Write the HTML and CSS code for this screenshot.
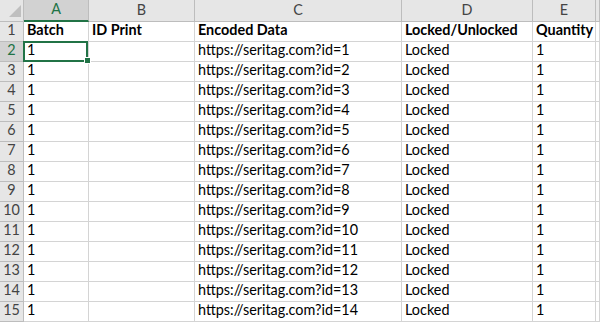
FILE: index.html
```html
<!DOCTYPE html>
<html lang="en">
<head>
    <meta charset="UTF-8">
    <title>Sheet1</title>
    <link rel="stylesheet" href="styles.css">
</head>
<body>
    <div id="sheet">
        <div class="row head-row">
            <div class="cell corner">
                <svg width="12" height="12" viewBox="0 0 12 12"><polygon points="0,12 12,12 12,0" fill="#bfbfbf"/></svg>
            </div>
            <div class="cell col-a col-head active">A</div>
            <div class="cell col-b col-head">B</div>
            <div class="cell col-c col-head">C</div>
            <div class="cell col-d col-head">D</div>
            <div class="cell col-e col-head">E</div>
            <div class="cell col-f col-head"></div>
        </div>
    </div>

    <script>
        const sheet = document.getElementById('sheet');

        function addRow(num, values, bold, selected) {
            const row = document.createElement('div');
            row.classList.add('row');

            const numCell = document.createElement('div');
            numCell.className = 'cell row-head';
            if (selected) numCell.classList.add('active');
            numCell.textContent = num;
            row.appendChild(numCell);

            const cols = ['col-a', 'col-b', 'col-c', 'col-d', 'col-e', 'col-f'];
            cols.forEach((col, i) => {
                const cell = document.createElement('div');
                cell.className = 'cell ' + col;
                if (bold) cell.classList.add('bold');
                if (selected && i === 0) cell.classList.add('selected');
                cell.textContent = values[i] || '';
                row.appendChild(cell);
            });
            sheet.appendChild(row);
        }

        addRow(1, ['Batch', 'ID Print', 'Encoded Data', 'Locked/Unlocked', 'Quantity'], true, false);
        for (let i = 1; i <= 14; i++) {
            addRow(i + 1, ['1', '', 'https://seritag.com?id=' + i, 'Locked', '1'], false, i === 1);
        }
    </script>
</body>
</html>
```

FILE: styles.css
```css
body {
    margin: 0;
    background: white;
    font-family: Lato, "Open Sans", sans-serif;
    font-size: 14.4px;
    color: #000;
    overflow: hidden;
}

#sheet {
    width: 600px;
}

.row {
    display: flex;
    height: 20px;
}

.head-row {
    height: 22px;
}

.cell {
    box-sizing: border-box;
    flex: none;
    height: 100%;
    border-right: 1px solid #d4d4d4;
    border-bottom: 1px solid #d4d4d4;
    padding: 0 0 3px 3px;
    display: flex;
    align-items: flex-end;
    white-space: nowrap;
    overflow: hidden;
    position: relative;
}

.bold {
    font-weight: bold;
}

.corner {
    width: 24px;
    background: #e6e6e6;
    border-right-color: #bdbdbd;
    border-bottom-color: #bdbdbd;
    padding: 0 2px 4px 0;
    justify-content: flex-end;
}

.corner svg {
    display: block;
}

.col-head {
    background: #e6e6e6;
    color: #444;
    justify-content: center;
    padding: 0 0 3px 0;
    border-right-color: #bdbdbd;
    border-bottom-color: #bdbdbd;
}

.row-head {
    width: 24px;
    background: #e6e6e6;
    color: #444;
    justify-content: center;
    padding: 0 0 3px 0;
    border-right-color: #bdbdbd;
    border-bottom-color: #bdbdbd;
}

.col-head.active {
    background: #d2d2d2;
    color: #217346;
    border-bottom: 2px solid #217346;
}

.row-head.active {
    background: #d2d2d2;
    color: #217346;
}

.col-a { width: 65px; }
.col-b { width: 106px; }
.col-c { width: 207px; }
.col-d { width: 131px; }
.col-e { width: 63px; }
.col-f { width: 4px; padding: 0; }

.selected {
    overflow: visible;
}

.selected::after {
    content: '';
    position: absolute;
    top: -1px;
    left: -1px;
    right: 0;
    bottom: -1px;
    border: 2px solid #217346;
}

.selected::before {
    content: '';
    position: absolute;
    right: -3px;
    bottom: -3px;
    width: 5px;
    height: 5px;
    background: #217346;
    border: 1px solid white;
    z-index: 1;
}
```
